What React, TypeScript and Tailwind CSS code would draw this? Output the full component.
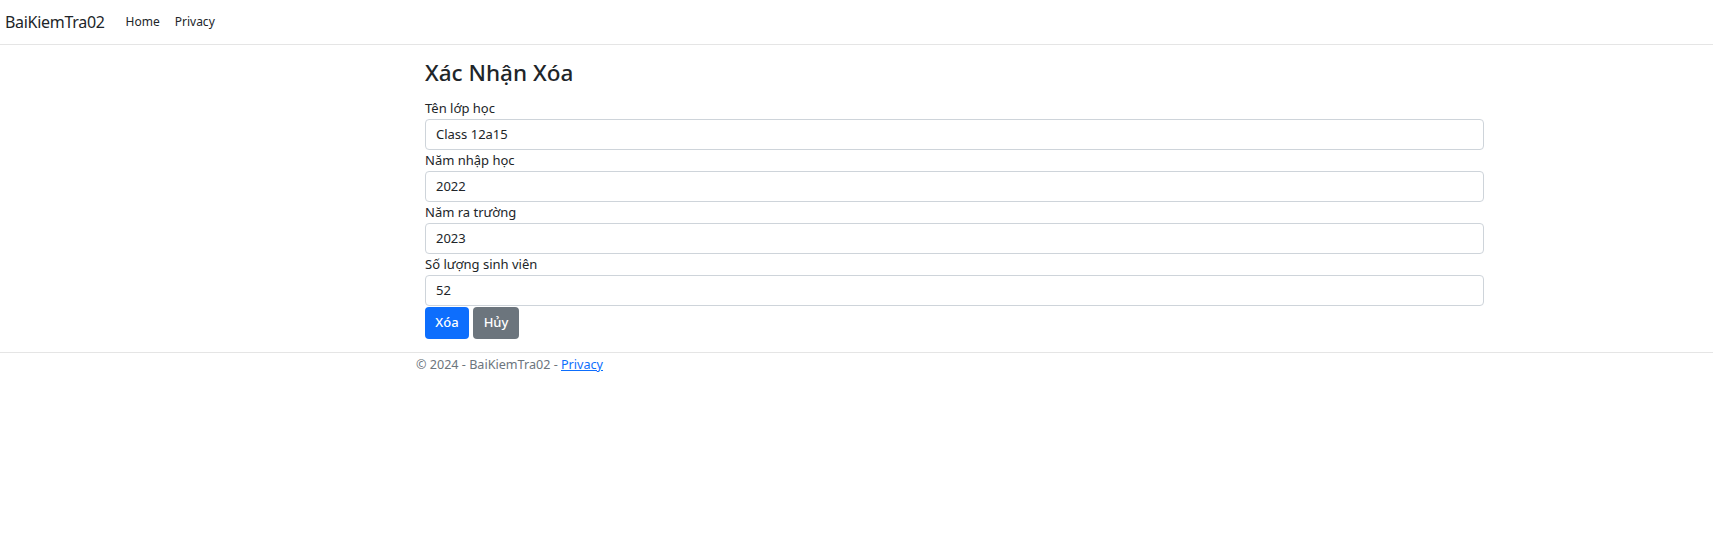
export default function App() {
  const fields = [
    { label: "Tên lớp học", value: "Class 12a15" },
    { label: "Năm nhập học", value: "2022" },
    { label: "Năm ra trường", value: "2023" },
    { label: "Số lượng sinh viên", value: "52" },
  ];
  return (
    <div className="min-h-[535px] bg-white text-[#212529] font-['Noto_Sans',sans-serif]">
      <header className="h-[45px] border-b border-[#e5e5e5] flex items-center pl-[5px]">
        <span className="text-[16px] tracking-[-0.3px] text-[#212529] mr-[21px]">BaiKiemTra02</span>
        <nav className="flex gap-[15px] text-[12px] text-[#212529]">
          <span>Home</span>
          <span>Privacy</span>
        </nav>
      </header>
      <main className="ml-[425px] w-[1059px] pt-[15px] pb-[13px]">
        <h4 className="text-[22.5px] font-medium leading-[25px] mb-[13px]">Xác Nhận Xóa</h4>
        <div className="flex flex-col">
          {fields.map((f) => (
            <div key={f.label} className="flex flex-col">
              <label className="text-[13px] leading-[21px]">{f.label}</label>
              <div className="h-[31px] border border-[#ced4da] rounded-[4px] flex items-center px-[10px] text-[13px]">
                {f.value}
              </div>
            </div>
          ))}
        </div>
        <div className="flex gap-[4px] mt-[1px]">
          <button className="h-[32px] w-[44px] bg-[#0d6efd] text-white rounded-[4px] text-[13px] font-medium">Xóa</button>
          <button className="h-[32px] w-[46px] bg-[#6c757d] text-white rounded-[4px] text-[13px] font-medium">Hủy</button>
        </div>
      </main>
      <footer className="border-t border-[#e5e5e5] pl-[416px] text-[12.6px] leading-[23px] text-[#6c757d]">
        © 2024 - BaiKiemTra02 - <a className="text-[#0d6efd] underline">Privacy</a>
      </footer>
    </div>
  );
}
